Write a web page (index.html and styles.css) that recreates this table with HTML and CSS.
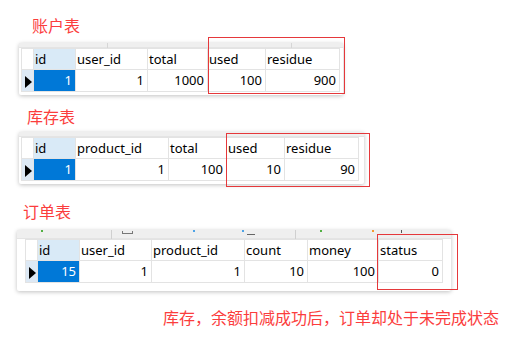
FILE: index.html
```html
<!DOCTYPE html>
<html lang="zh-CN">
  <head>
    <meta charset="UTF-8" />
    <title>事务状态</title>
    <link rel="stylesheet" href="styles.css">
  </head>
  <body>
    <!-- 账户表 -->
    <section class="block block-account">
      <div class="title">账户表</div>
      <div class="grid-card">
        <div class="strip">
          <span class="tick t-a1"></span>
          <span class="tick t-a2"></span>
        </div>
        <table class="grid">
          <colgroup>
            <col style="width:12px" />
            <col style="width:42px" />
            <col style="width:72px" />
            <col style="width:60px" />
            <col style="width:58px" />
            <col style="width:74px" />
          </colgroup>
          <tr class="head">
            <th class="ind"></th>
            <th class="key">id</th>
            <th>user_id</th>
            <th>total</th>
            <th>used</th>
            <th>residue</th>
          </tr>
          <tr>
            <td class="ind"><span class="arrow"></span></td>
            <td class="sel">1</td>
            <td>1</td>
            <td>1000</td>
            <td>100</td>
            <td>900</td>
          </tr>
        </table>
        <div class="mark mark-account"></div>
      </div>
    </section>

    <!-- 库存表 -->
    <section class="block block-storage">
      <div class="title">库存表</div>
      <div class="grid-card">
        <div class="strip"></div>
        <table class="grid">
          <colgroup>
            <col style="width:12px" />
            <col style="width:42px" />
            <col style="width:93px" />
            <col style="width:58px" />
            <col style="width:58px" />
            <col style="width:74px" />
          </colgroup>
          <tr class="head">
            <th class="ind"></th>
            <th class="key">id</th>
            <th>product_id</th>
            <th>total</th>
            <th>used</th>
            <th>residue</th>
          </tr>
          <tr>
            <td class="ind"><span class="arrow"></span></td>
            <td class="sel">1</td>
            <td>1</td>
            <td>100</td>
            <td>10</td>
            <td>90</td>
          </tr>
        </table>
        <div class="mark mark-storage"></div>
      </div>
    </section>

    <!-- 订单表 -->
    <section class="block block-order">
      <div class="title">订单表</div>
      <div class="grid-card">
        <div class="strip strip-tall">
          <span class="bit green b1"></span>
          <span class="sep s1"></span>
          <span class="bit box b2"></span>
          <span class="bit blue b3"></span>
          <span class="bit blue b4"></span>
          <span class="bit dash b5"></span>
          <span class="sep s2"></span>
          <span class="bit green b6"></span>
          <span class="bit orange b7"></span>
          <span class="bit dark b8"></span>
        </div>
        <table class="grid">
          <colgroup>
            <col style="width:12px" />
            <col style="width:42px" />
            <col style="width:72px" />
            <col style="width:93px" />
            <col style="width:63px" />
            <col style="width:71px" />
            <col style="width:64px" />
          </colgroup>
          <tr class="head">
            <th class="ind"></th>
            <th class="key">id</th>
            <th>user_id</th>
            <th>product_id</th>
            <th>count</th>
            <th>money</th>
            <th>status</th>
          </tr>
          <tr>
            <td class="ind"><span class="arrow"></span></td>
            <td class="sel">15</td>
            <td>1</td>
            <td>1</td>
            <td>10</td>
            <td>100</td>
            <td>0</td>
          </tr>
        </table>
        <div class="mark mark-order"></div>
      </div>
    </section>

    <p class="note">库存，余额扣减成功后，订单却处于未完成状态</p>
  </body>
</html>
```

FILE: styles.css
```css
/* General */
body {
  margin: 0;
  width: 519px;
  height: 360px;
  background: #fff;
  font-family: "Noto Sans", "Noto Sans CJK SC", sans-serif;
  color: #000;
  overflow: hidden;
}

.title,
.note {
  font-family: "Noto Sans CJK SC", sans-serif;
  font-size: 16px;
  line-height: 20px;
  color: #fb3d3d;
}

/* Blocks */
.block-account {
  padding: 15px 0 0 19px;
}
.block-account .title {
  margin: 0 0 8px 13px;
}
.block-account .grid-card {
  width: 324px;
}

.block-storage {
  padding: 11px 0 0 19px;
}
.block-storage .title {
  margin: 0 0 6px 8px;
}
.block-storage .grid-card {
  width: 345px;
}

.block-order {
  padding: 17px 0 0 17px;
}
.block-order .title {
  margin: 0 0 9px 6px;
}
.block-order .grid-card {
  width: 434px;
  padding-left: 8px;
}
.block-order .grid-card .strip {
  margin-left: -8px;
}

/* Data grid card */
.grid-card {
  position: relative;
  box-sizing: border-box;
  background: #fff;
  padding: 0 0 3px 2px;
  border-radius: 2px;
  box-shadow: 0 1px 4px rgba(0, 0, 0, 0.25);
}

.strip {
  position: relative;
  height: 5px;
  margin-left: -2px;
  background: #efefef;
  border-bottom: 1px solid #e4e4e4;
  box-sizing: border-box;
}

.strip-tall {
  height: 9px;
}

.block-order .grid-card {
  padding-bottom: 8px;
}

.tick {
  position: absolute;
  top: 0;
  width: 1px;
  height: 5px;
  background: #d6d6d6;
}
.t-a1 { left: 88px; }
.t-a2 { left: 272px; }

/* toolbar leftovers peeking over the grid */
.bit,
.sep {
  position: absolute;
}
.sep {
  top: 0;
  width: 1px;
  height: 9px;
  background: #d0d0d0;
}
.s1 { left: 94px; }
.s2 { left: 278px; }
.bit {
  top: 0;
  width: 2px;
  height: 2px;
}
.green { background: #52b043; }
.blue { background: #4da3e6; }
.orange { background: #f59a2d; }
.dark { background: #555; }
.b1 { left: 24px; }
.b2 {
  left: 105px;
  top: 1px;
  width: 11px;
  height: 3px;
  border: 1px solid #777;
  border-top: none;
  box-sizing: border-box;
}
.b3 { left: 176px; }
.b4 { left: 225px; }
.b5 {
  left: 230px;
  top: 4px;
  width: 8px;
  height: 1px;
  background: #666;
}
.b6 { left: 303px; }
.b7 { left: 355px; }
.b8 { left: 384px; width: 1px; height: 3px; }

.grid {
  border-collapse: collapse;
  table-layout: fixed;
  font-size: 13px;
}

.grid th,
.grid td {
  height: 21px;
  padding: 0 3px;
  border: 1px solid #e3e3e3;
  box-sizing: border-box;
  white-space: nowrap;
  overflow: hidden;
  line-height: 19px;
}

.grid tr:last-child td {
  height: 22px;
}

.grid th {
  font-weight: normal;
  text-align: left;
  padding-left: 1px;
  background: #fff;
}

.grid td {
  text-align: right;
}

.grid .key {
  background: #d9eaf7;
}

.grid .ind {
  padding: 0;
  background: #fff;
}

.grid td.ind {
  background: #dde9f5;
  text-align: left;
}

.arrow {
  display: inline-block;
  margin-left: 3px;
  vertical-align: middle;
  border-top: 6px solid transparent;
  border-bottom: 6px solid transparent;
  border-left: 7px solid #000;
}

.grid .sel {
  background: #0078d7;
  color: #fff;
}

/* Red highlight boxes */
.mark {
  position: absolute;
  border: 1px solid #e5383b;
  box-sizing: border-box;
}
.mark-account {
  left: 189px;
  top: -6px;
  width: 137px;
  height: 57px;
}
.mark-storage {
  left: 207px;
  top: 1px;
  width: 144px;
  height: 54px;
}
.mark-order {
  left: 360px;
  top: 4px;
  width: 81px;
  height: 56px;
}

.note {
  margin: 16px 0 0 163px;
}
```
